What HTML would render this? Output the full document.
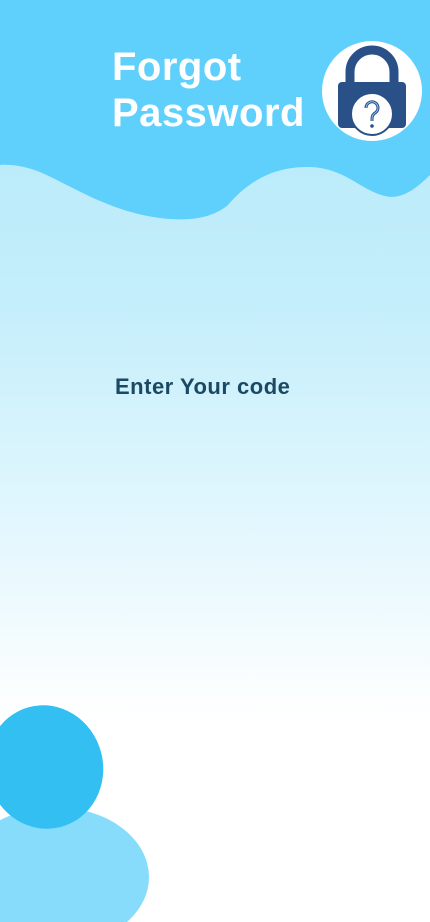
<!DOCTYPE html>
<html><head><meta charset="utf-8"><style>
html,body{margin:0;padding:0}
body{width:430px;height:922px;position:relative;overflow:hidden;font-family:"Liberation Sans",sans-serif;background:linear-gradient(180deg,#b2e8f9 0px,#c4eefb 300px,#e6f8fe 550px,#ffffff 720px,#ffffff 922px)}
.t{position:absolute;left:112px;top:44px;color:#fff;font-weight:bold;font-size:40px;line-height:46px;letter-spacing:0.5px}
.e{position:absolute;left:115px;top:374px;color:#1a4a63;font-weight:bold;font-size:22px;letter-spacing:0.5px;white-space:nowrap}
</style></head><body>
<svg width="430" height="922" style="position:absolute;left:0;top:0">
<path d="M0 0H430V175C415 190 400 200 385 196C360 190 345 168 310 167C270 166 245 185 228 205C210 220 185 221 160 218C110 212 70 185 40 172C25 166 10 164 0 165Z" fill="#5fd0fc"/>
<ellipse cx="55" cy="877" rx="94" ry="70" fill="#87dcfb"/>
<ellipse cx="45" cy="767" rx="58" ry="62" transform="rotate(-15 45 767)" fill="#33bff2"/>
<circle cx="372" cy="91" r="50" fill="#fff"/>
<path d="M350 85V72A22 22 0 0 1 394 72V85" fill="none" stroke="#2a5187" stroke-width="9"/>
<rect x="338" y="82" width="68" height="46" rx="4" fill="#2a5187"/>
<circle cx="372" cy="114" r="21" fill="#fff" stroke="#2a5187" stroke-width="2"/>
<path d="M366 108A6 6 0 1 1 375 113C372 115 372 117 372 121" fill="none" stroke="#2a5187" stroke-width="3"/>
<path d="M366 108A6 6 0 1 1 375 113C372 115 372 117 372 121" fill="none" stroke="#8fc0ec" stroke-width="1"/>
<circle cx="372" cy="126" r="1.8" fill="#2a5187"/>
</svg>
<div class="t">Forgot<br>Password</div>
<div class="e">Enter Your code</div>
</body></html>
